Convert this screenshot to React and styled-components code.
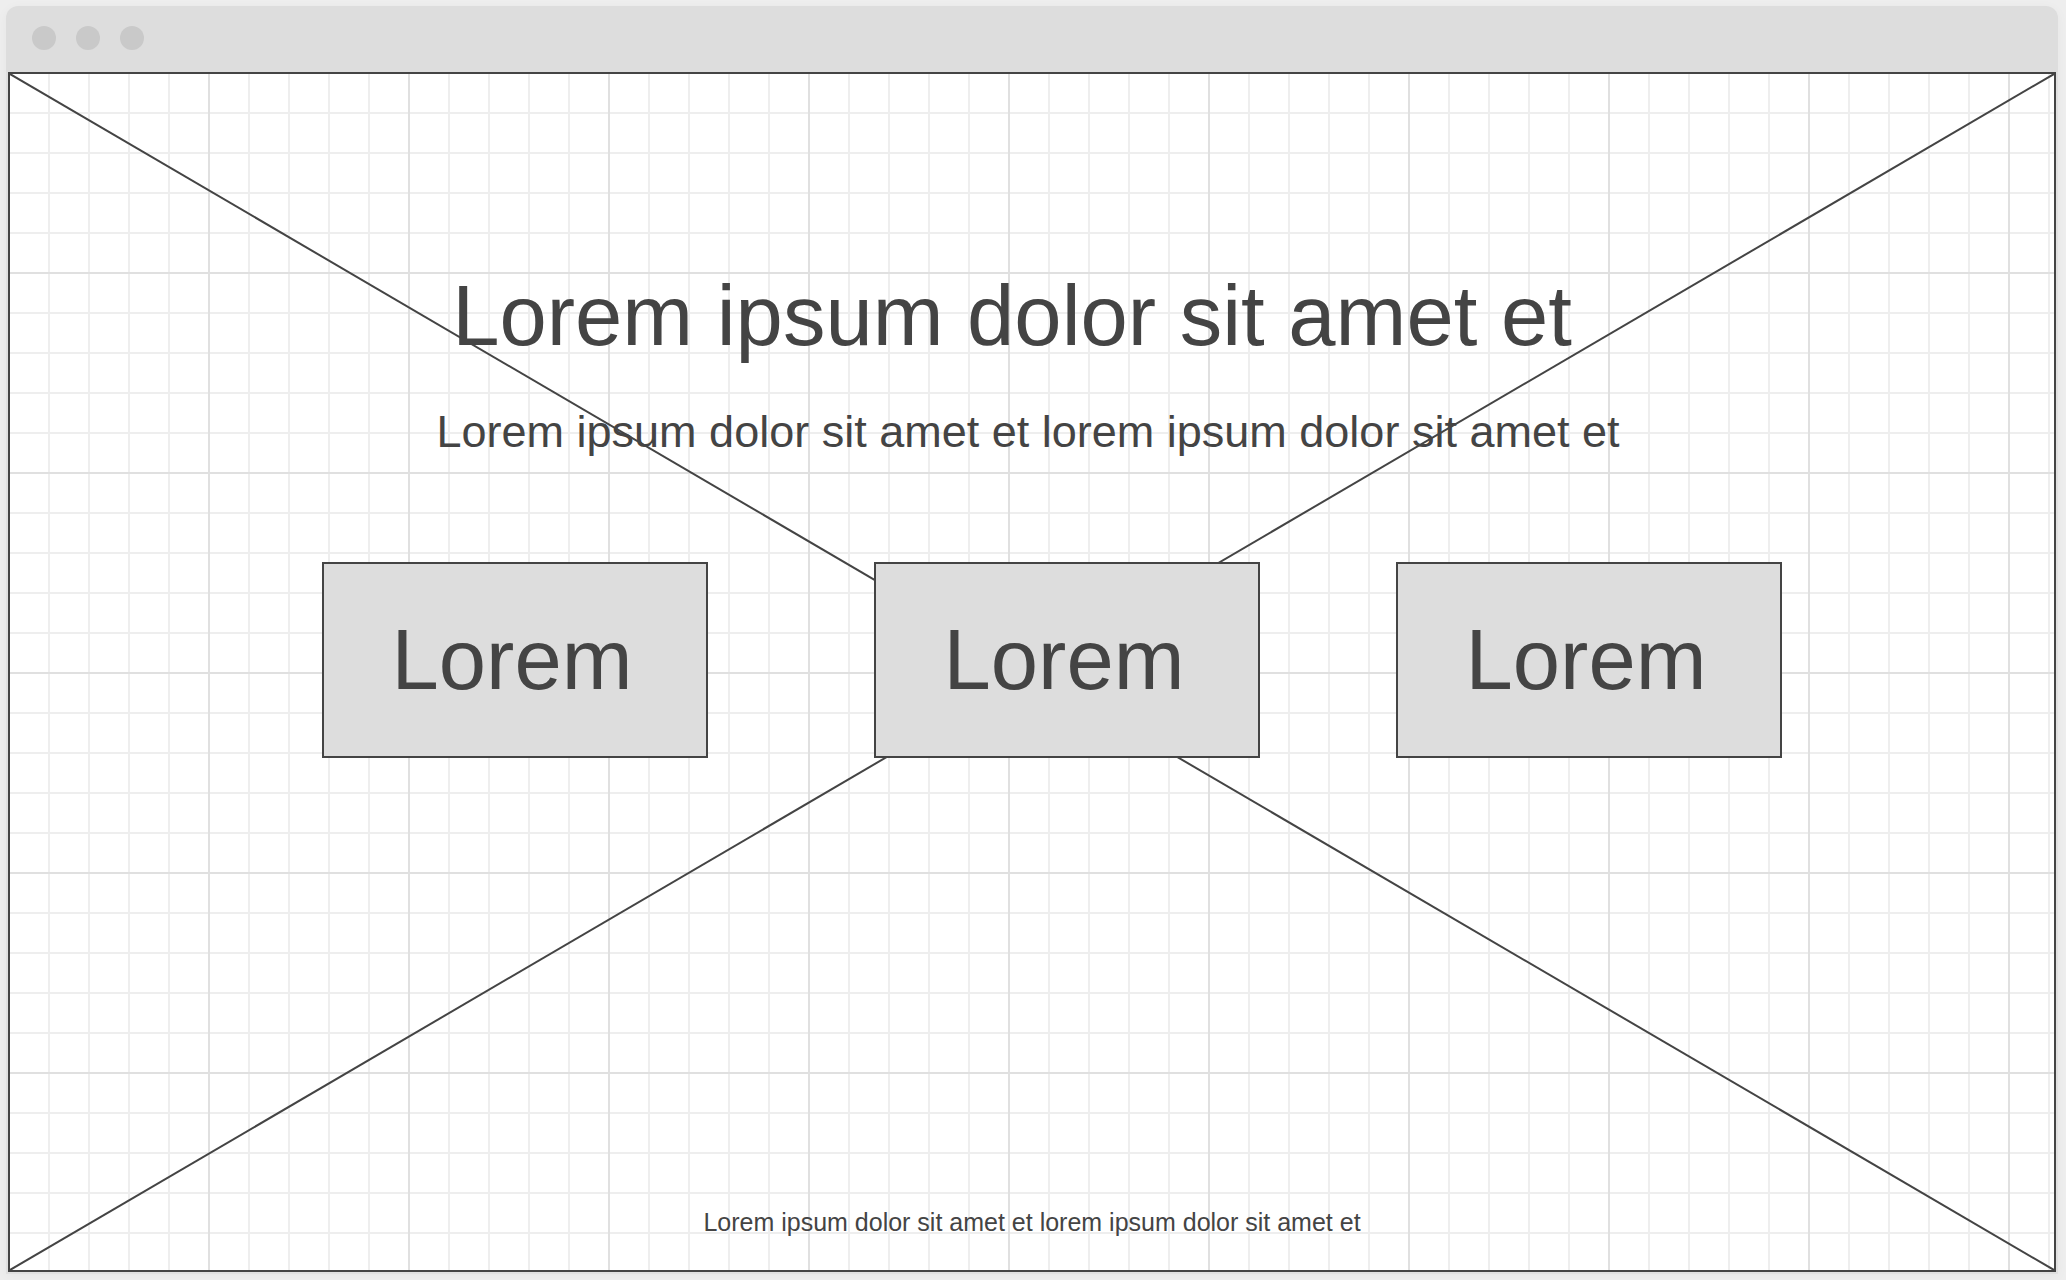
import React from "react";
import styled, { createGlobalStyle } from "styled-components";

const ink = "#444";
const panel = "#ddd";

const GlobalStyle = createGlobalStyle`
  *, *::before, *::after { box-sizing: border-box; }
  body {
    margin: 0;
    background: #eee;
    color: ${ink};
    font-family: "Liberation Sans", Arial, sans-serif;
  }
`;

const Page = styled.div`
  display: flex;
  min-height: 100vh;
  padding: 6px 8px 6px 6px;
`;

const BrowserWindow = styled.div`
  flex: 1;
  display: flex;
  flex-direction: column;
  padding: 0 2px 2px;
  border-radius: 12px 12px 0 0;
  background: linear-gradient(${panel} 66px, #e0e0e0 66px);
  box-shadow: 0 2px 12px rgba(0, 0, 0, 0.04);
`;

const TitleBar = styled.header`
  display: flex;
  align-items: flex-start;
  gap: 20px;
  height: 66px;
  padding: 20px 24px;
`;

const Dot = styled.span`
  width: 24px;
  height: 24px;
  border-radius: 50%;
  background: #c9c9c9;
`;

const Canvas = styled.main`
  flex: 1;
  display: grid;
  border: 2px solid ${ink};
  background-color: #fff;
  background-image:
    linear-gradient(to right, #e0e0e0 2px, transparent 2px),
    linear-gradient(to bottom, #e0e0e0 2px, transparent 2px),
    linear-gradient(to right, #eee 2px, transparent 2px),
    linear-gradient(to bottom, #eee 2px, transparent 2px);
  background-size: 200px 200px, 200px 200px, 40px 40px, 40px 40px;
  background-origin: border-box;
`;

const Cross = styled.svg`
  grid-area: 1 / 1;
  width: 100%;
  height: 100%;
  min-height: 0;
  contain: size;
  stroke: ${ink};
  stroke-width: 2;
`;

const Content = styled.div`
  grid-area: 1 / 1;
  z-index: 1;
  display: flex;
  flex-direction: column;
  padding: 192px 0 32px;
  text-align: center;
`;

const Title = styled.h1`
  margin: 0;
  padding-right: 40px;
  font-size: 85px;
  font-weight: 400;
  line-height: 100px;
`;

const Subtitle = styled.p`
  margin: 40px 0 0;
  padding-right: 8px;
  font-size: 45px;
  line-height: 52px;
`;

const Actions = styled.div`
  display: grid;
  grid-template-columns: 312fr 386px 166fr 386px 136fr 386px 272fr;
  margin-top: 104px;
`;

const ActionButton = styled.button`
  grid-column: ${({ $column }) => $column};
  height: 196px;
  padding: 0 6px 0 0;
  border: 2px solid ${ink};
  border-radius: 0;
  background: ${panel};
  color: inherit;
  font: inherit;
  font-size: 85px;
  line-height: 100px;
`;

const Footnote = styled.p`
  margin: auto 0 0;
  font-size: 25px;
  line-height: 32px;
`;

export default function App() {
  return (
    <>
      <GlobalStyle />
      <Page>
        <BrowserWindow>
          <TitleBar>
            <Dot />
            <Dot />
            <Dot />
          </TitleBar>
          <Canvas>
            <Cross aria-hidden="true">
              <line x1="0" y1="0" x2="100%" y2="100%" />
              <line x1="100%" y1="0" x2="0" y2="100%" />
            </Cross>
            <Content>
              <Title>Lorem ipsum dolor sit amet et</Title>
              <Subtitle>Lorem ipsum dolor sit amet et lorem ipsum dolor sit amet et</Subtitle>
              <Actions>
                {[2, 4, 6].map((column) => (
                  <ActionButton key={column} type="button" $column={column}>
                    Lorem
                  </ActionButton>
                ))}
              </Actions>
              <Footnote>Lorem ipsum dolor sit amet et lorem ipsum dolor sit amet et</Footnote>
            </Content>
          </Canvas>
        </BrowserWindow>
      </Page>
    </>
  );
}
